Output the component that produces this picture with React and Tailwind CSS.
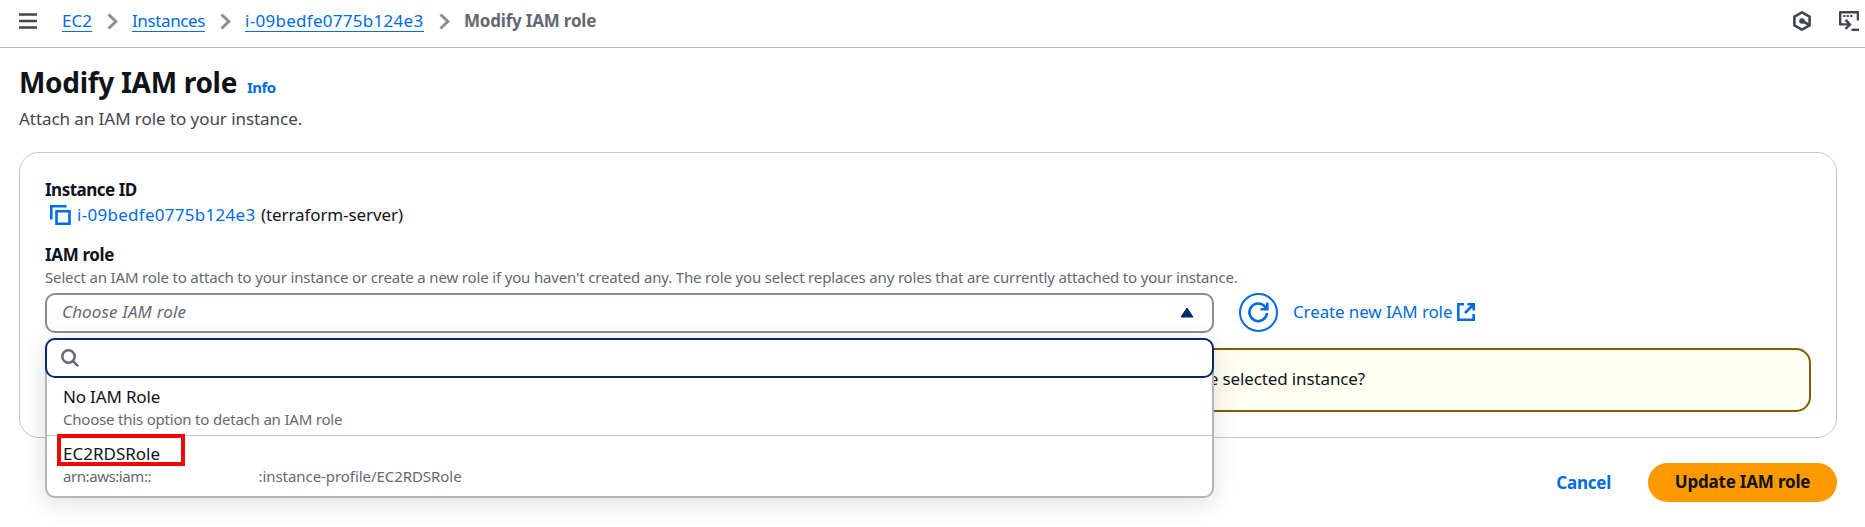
function Chevron() {
  return (
    <svg className="h-[17px] w-[11px] shrink-0" viewBox="0 0 11 17" fill="none" stroke="#8c8c94" strokeWidth="3">
      <path d="M1.5 1.5 8.8 8.5 1.5 15.5" />
    </svg>
  );
}

function Header() {
  return (
    <header className="flex h-12 items-start justify-between border-b border-[#b4b4bb] pt-[11px] pr-[6px] pl-[19px]">
      <nav className="flex h-5 items-center">
        <svg className="h-4 w-[18px]" viewBox="0 0 18 16" stroke="#424650" strokeWidth="2.4">
          <path d="M0 1.5h18M0 8h18M0 14.5h18" />
        </svg>
        <a className="mt-[1px] ml-[25px] h-[21px] w-[30px] border-b border-[#006ce0] leading-[19px] text-[#006ce0]">EC2</a>
        <span className="ml-[15px] flex"><Chevron /></span>
        <a className="mt-[1px] ml-[14px] h-[21px] w-[73px] border-b border-[#006ce0] leading-[19px] tracking-[-0.39px] text-[#006ce0]">Instances</a>
        <span className="ml-[15px] flex"><Chevron /></span>
        <a className="mt-[1px] ml-[14px] h-[21px] w-[179px] border-b border-[#006ce0] leading-[19px] tracking-[0.28px] text-[#006ce0]">i-09bedfe0775b124e3</a>
        <span className="ml-[15px] flex"><Chevron /></span>
        <span className="ml-[14px] leading-5 font-bold tracking-[-0.2px] text-[#656871]">Modify IAM role</span>
      </nav>
      <div className="flex items-center gap-7">
        <svg className="h-5 w-[18px]" viewBox="0 0 18 20" fill="none" stroke="#424650" strokeWidth="2.6">
          <path d="M9 1.3 16.6 5.6v8.8L9 18.7 1.4 14.4V5.6z" strokeLinejoin="round" />
          <circle cx="9" cy="10" r="2.8" fill="#424650" stroke="none" />
          <path d="m9 10 7.6 4" strokeWidth="2.6" />
        </svg>
        <svg className="h-5 w-5" viewBox="0 0 20 20" fill="none" stroke="#424650" strokeWidth="2.4">
          <path d="M18.9 9.500V1.200H1.200V13.400H10.500" strokeLinejoin="round" />
          <path d="M6.500 8.800 11 13.400 6.500 18" />
          <path d="M12.500 18.800h7.500" />
          <path d="M4.300 5h2.200M7.700 5h2.200M11.200 5h2.200" strokeWidth="2" />
        </svg>
      </div>
    </header>
  );
}

function Dropdown() {
  return (
    <div className="absolute top-[45px] left-0 z-10 h-40 w-[1169px] rounded-[10px] border-2 border-[#b4b4bb] bg-white shadow-[0_5px_25px_1px_rgba(0,7,22,0.12)]">
      <div className="-mx-[2px] -mt-[2px] flex h-10 items-center rounded-[10px] border-2 border-[#002b66] bg-white pl-[14px]">
        <svg className="h-[18px] w-[18px]" viewBox="0 0 18 18" fill="none" stroke="#656871" strokeWidth="2.5">
          <circle cx="7.500" cy="7.500" r="6.200" />
          <path d="m11.800 11.800 5.300 5.300" />
        </svg>
      </div>
      <div className="h-[58px] border-b border-[#c6c6cd] pt-[9px] pl-4">
        <div className="leading-5 tracking-[-0.17px]">No IAM Role</div>
        <div className="mt-[3px] text-[15px] leading-[18px] tracking-[-0.2px] text-[#656871]">Choose this option to detach an IAM role</div>
      </div>
      <div className="relative pt-2 pl-4">
        <div className="leading-5">EC2RDSRole</div>
        <div className="mt-[3px] flex text-[15px] leading-[18px] text-[#656871]">
          <span className="w-[195.500px] tracking-[-0.43px]">arn:aws:iam::</span>
          <span className="tracking-[-0.06px]">:instance-profile/EC2RDSRole</span>
        </div>
        <div className="absolute -top-[2px] left-[10px] h-8 w-[128px] border-4 border-[#f00808]" />
      </div>
    </div>
  );
}

export default function App() {
  return (
    <div className="h-[527px] overflow-hidden bg-white font-['Noto_Sans',sans-serif] text-[17px] text-[#0f141a]">
      <Header />
      <main className="pt-4 pr-7 pl-[19px]">
        <div className="flex items-baseline">
          <h1 className="text-[28px] leading-9 font-bold tracking-[-0.3px]">Modify IAM role</h1>
          <a className="ml-[10px] text-[15px] leading-5 font-bold tracking-[-0.6px] text-[#006ce0]">Info</a>
        </div>
        <p className="mt-[9px] leading-5 tracking-[-0.06px] text-[#424650]">Attach an IAM role to your instance.</p>

        <section className="mt-[23px] h-[286px] rounded-[20px] border border-[#c6c6cd] px-[25px] pt-[27px]">
          <div className="leading-5 font-bold tracking-[-0.5px]">Instance ID</div>
          <div className="mt-[5px] flex h-5 items-center leading-5">
            <svg className="ml-[5px] h-5 w-[21px]" viewBox="0 0 21 20" fill="none" stroke="#006ce0" strokeWidth="2.600">
              <path d="M1.300 14.500V1.300H16.500" />
              <path d="M6.500 6.200h13v12.500h-13z" />
            </svg>
            <a className="ml-[6px] w-[184px] tracking-[0.28px] text-[#006ce0]">i-09bedfe0775b124e3</a>
            <span className="tracking-[-0.1px]">(terraform-server)</span>
          </div>
          <div className="mt-5 leading-5 font-bold tracking-[-0.35px]">IAM role</div>
          <p className="mt-[3px] text-[15px] leading-[18px] tracking-[-0.160px] whitespace-nowrap text-[#656871]">
            Select an IAM role to attach to your instance or create a new role if you haven't created any. The role you select replaces any roles that are currently attached to your instance.
          </p>
          <div className="relative mt-[7px] flex items-center">
            <div className="flex h-10 w-[1169px] items-center justify-between rounded-[10px] border-2 border-[#8c8c94] pr-[18px] pb-[2px] pl-[15px]">
              <span className="leading-5 tracking-[0.15px] text-[#656871] italic">Choose IAM role</span>
              <svg className="h-[11px] w-[14px]" viewBox="0 0 14 11" fill="#002b66" stroke="#002b66" strokeWidth="1" strokeLinejoin="round">
                <path d="M7 1 13 10H1z" />
              </svg>
            </div>
            <button className="mb-px ml-[25px] flex h-[39px] w-[39px] items-center justify-center rounded-full border-2 border-[#006ce0]">
              <svg className="h-[21px] w-[21px]" viewBox="0 0 21 21" fill="none" stroke="#006ce0" strokeWidth="2.600">
                <path d="M19 11A8.800 8.800 0 1 1 17 4.700L19 7" />
                <path d="M19.300 0.500v6.800H12.500" />
              </svg>
            </button>
            <a className="mb-[2px] ml-[15px] flex items-center leading-5 text-[#006ce0]">
              <span className="w-[164px] tracking-[-0.12px]">Create new IAM role</span>
              <svg className="h-[18px] w-[18px]" viewBox="0 0 18 18" fill="none" stroke="#006ce0" strokeWidth="2.600">
                <path d="M7 1.300H1.300v15.400h15.400V11" />
                <path d="M10.500 1.300h6.200V7.500M16.500 1.500 8 10" />
              </svg>
            </a>
            <Dropdown />
          </div>
          <div className="mt-[15px] flex h-16 items-center rounded-[15px] border-2 border-[#855900] bg-[#fffef0] pb-[2px]">
            <span className="w-[1318px] text-right leading-5 tracking-[-0.13px]">the selected instance?</span>
          </div>
        </section>

        <footer className="mt-[25px] flex items-center justify-end leading-5 font-bold">
          <button className="mr-[37px] tracking-[-0.25px] text-[#006ce0]">Cancel</button>
          <button className="h-[39px] w-[189px] rounded-full bg-[#ff9900] pb-px tracking-[-0.2px]">Update IAM role</button>
        </footer>
      </main>
    </div>
  );
}
